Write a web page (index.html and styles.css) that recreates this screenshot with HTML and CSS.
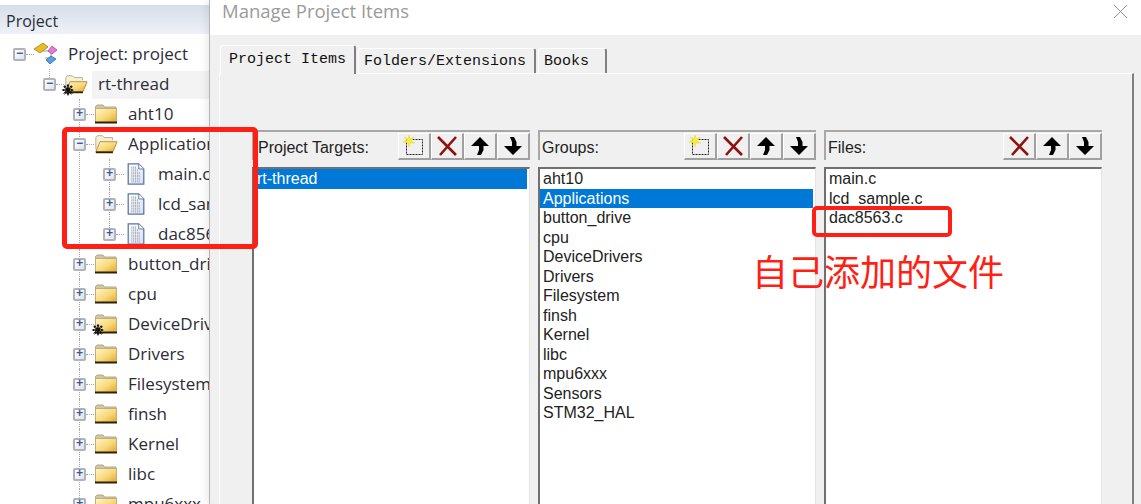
FILE: index.html
```html
<!DOCTYPE html>
<html lang="zh-CN">
<head>
    <meta charset="UTF-8">
    <title>Manage Project Items</title>
    <link rel="stylesheet" href="styles.css">
</head>
<body>
    <svg class="sprites" width="0" height="0" aria-hidden="true">
        <defs>
            <linearGradient id="folderFill" x1="0" y1="0" x2="1" y2="1">
                <stop offset="0" stop-color="#fff6c8"/>
                <stop offset="0.55" stop-color="#f8d878"/>
                <stop offset="1" stop-color="#dfa32c"/>
            </linearGradient>
            <linearGradient id="docFill" x1="0" y1="0" x2="1" y2="1">
                <stop offset="0" stop-color="#ffffff"/>
                <stop offset="1" stop-color="#d5e0f2"/>
            </linearGradient>
            <symbol id="folder" viewBox="0 0 24 22">
                <path d="M1.5 5V3.5L3 2h6l1.5 2H22v2H1.500z" fill="#cfc7a6" stroke="#b3aa88"/>
                <rect x="1.500" y="5.500" width="21" height="14" fill="url(#folderFill)" stroke="#bfae78"/>
                <rect x="1" y="18.500" width="22" height="2" fill="#2d2206"/>
            </symbol>
            <symbol id="folder-open" viewBox="0 0 26 22">
                <path d="M2 17V4l1.500-2H9l2 2h9v3" fill="#f6f0d6" stroke="#b3aa88"/>
                <path d="M2 19.500 6.500 8.500H25L20.500 19.500z" fill="url(#folderFill)" stroke="#b58c30"/>
                <path d="M2 20h18.500" stroke="#2d2206" stroke-width="2"/>
            </symbol>
            <symbol id="doc" viewBox="0 0 20 24">
                <path d="M1.500 1H13L18.500 6.500V23H1.500z" fill="url(#docFill)" stroke="#5f769f" stroke-width="1.400"/>
                <path d="M13 1V6.500h5.500" fill="#fff" stroke="#5f769f"/>
                <path d="M5 5h6M5 8h8M5 11h10M5 14h10M5 17h10M5 20h10" stroke="#a8acb6" stroke-width="2.400" stroke-dasharray="1 1"/>
            </symbol>
            <symbol id="gear" viewBox="0 0 12 12">
                <path d="M6 .5v11M.5 6h11M2 2l8 8M10 2l-8 8" stroke="#111" stroke-width="2.200" stroke-dasharray="2.200 .5"/>
            </symbol>
            <symbol id="project" viewBox="0 0 24 22">
                <path d="M8 8h9M17 8v9M11 15h6" fill="none" stroke="#9a9a9a"/>
                <path d="M9 0 14 4 6 10 0 6z" fill="#e6bc2c" stroke="#a58214" stroke-width=".8"/>
                <path d="M18 3 23 7 18 11 14 8z" fill="#e77ad6" stroke="#a54a98" stroke-width=".8"/>
                <path d="M17 13 22 16 16 21 12 17z" fill="#5c9fe0" stroke="#2d68a8" stroke-width=".8"/>
            </symbol>
            <symbol id="tool-new" viewBox="0 0 22 22">
                <rect x="3.500" y="4.500" width="16" height="15" fill="none" stroke="#222" stroke-dasharray="2 1"/>
                <path d="M6 0 7 4 11 2 8 6 12 8 7 8 6 12 5 8 0 7 4 5 1 2 5 4z" fill="#f6ee3c" stroke="#e8d820" stroke-width=".5"/>
            </symbol>
            <symbol id="tool-del" viewBox="0 0 22 22">
                <path d="M2 2 20 20M20 2 4 20" fill="none" stroke="#8e1010" stroke-width="2.600"/>
            </symbol>
            <symbol id="tool-up" viewBox="0 0 22 22">
                <path d="M11 2 20 11H14.500V15L12 20H8L10 15V11H2z" fill="#000"/>
            </symbol>
            <symbol id="tool-down" viewBox="0 0 22 22">
                <path d="M11 20 20 11H14.500V7L12 2H8L10 7V11H2z" fill="#000"/>
            </symbol>
        </defs>
    </svg>

    <div class="page">
        <aside class="project">
            <div class="project-head">Project</div>
            <ul class="tree">
                <li>
                    <div class="node">
                        <span class="toggle">&minus;</span><span class="dots"></span>
                        <svg class="icon"><use href="#project"/></svg>
                        <span class="label">Project: project</span>
                    </div>
                    <ul>
                        <li>
                            <div class="node">
                                <span class="toggle">&minus;</span><span class="dots"></span>
                                <span class="icon-wrap">
                                    <svg class="icon"><use href="#folder-open"/></svg>
                                    <svg class="gear"><use href="#gear"/></svg>
                                </span>
                                <span class="label current">rt-thread</span>
                            </div>
                            <ul>
                                <li>
                                    <div class="node">
                                        <span class="toggle">+</span><span class="dots"></span>
                                        <svg class="icon"><use href="#folder"/></svg>
                                        <span class="label">aht10</span>
                                    </div>
                                </li>
                                <li>
                                    <div class="node">
                                        <span class="toggle">&minus;</span><span class="dots"></span>
                                        <svg class="icon"><use href="#folder-open"/></svg>
                                        <span class="label">Applications</span>
                                    </div>
                                    <ul>
                                        <li>
                                            <div class="node">
                                                <span class="toggle">+</span><span class="dots"></span>
                                                <svg class="icon"><use href="#doc"/></svg>
                                                <span class="label">main.c</span>
                                            </div>
                                        </li>
                                        <li>
                                            <div class="node">
                                                <span class="toggle">+</span><span class="dots"></span>
                                                <svg class="icon"><use href="#doc"/></svg>
                                                <span class="label">lcd_sample.c</span>
                                            </div>
                                        </li>
                                        <li>
                                            <div class="node">
                                                <span class="toggle">+</span><span class="dots"></span>
                                                <svg class="icon"><use href="#doc"/></svg>
                                                <span class="label">dac8563.c</span>
                                            </div>
                                        </li>
                                    </ul>
                                </li>
                                <li>
                                    <div class="node">
                                        <span class="toggle">+</span><span class="dots"></span>
                                        <svg class="icon"><use href="#folder"/></svg>
                                        <span class="label">button_drive</span>
                                    </div>
                                </li>
                                <li>
                                    <div class="node">
                                        <span class="toggle">+</span><span class="dots"></span>
                                        <svg class="icon"><use href="#folder"/></svg>
                                        <span class="label">cpu</span>
                                    </div>
                                </li>
                                <li>
                                    <div class="node">
                                        <span class="toggle">+</span><span class="dots"></span>
                                        <span class="icon-wrap">
                                            <svg class="icon"><use href="#folder"/></svg>
                                            <svg class="gear"><use href="#gear"/></svg>
                                        </span>
                                        <span class="label">DeviceDrivers</span>
                                    </div>
                                </li>
                                <li>
                                    <div class="node">
                                        <span class="toggle">+</span><span class="dots"></span>
                                        <svg class="icon"><use href="#folder"/></svg>
                                        <span class="label">Drivers</span>
                                    </div>
                                </li>
                                <li>
                                    <div class="node">
                                        <span class="toggle">+</span><span class="dots"></span>
                                        <svg class="icon"><use href="#folder"/></svg>
                                        <span class="label">Filesystem</span>
                                    </div>
                                </li>
                                <li>
                                    <div class="node">
                                        <span class="toggle">+</span><span class="dots"></span>
                                        <svg class="icon"><use href="#folder"/></svg>
                                        <span class="label">finsh</span>
                                    </div>
                                </li>
                                <li>
                                    <div class="node">
                                        <span class="toggle">+</span><span class="dots"></span>
                                        <svg class="icon"><use href="#folder"/></svg>
                                        <span class="label">Kernel</span>
                                    </div>
                                </li>
                                <li>
                                    <div class="node">
                                        <span class="toggle">+</span><span class="dots"></span>
                                        <svg class="icon"><use href="#folder"/></svg>
                                        <span class="label">libc</span>
                                    </div>
                                </li>
                                <li>
                                    <div class="node">
                                        <span class="toggle">+</span><span class="dots"></span>
                                        <svg class="icon"><use href="#folder"/></svg>
                                        <span class="label">mpu6xxx</span>
                                    </div>
                                </li>
                            </ul>
                        </li>
                    </ul>
                </li>
            </ul>
        </aside>

        <section class="dialog">
            <header class="dialog-title">
                <span>Manage Project Items</span>
                <svg class="close" viewBox="0 0 16 16"><path d="M1 1 15 15M15 1 1 15"/></svg>
            </header>
            <div class="dialog-body">
                <div class="tabs">
                    <div class="tab active">Project Items</div>
                    <div class="tab">Folders/Extensions</div>
                    <div class="tab tab-books">Books</div>
                </div>
                <div class="pane">
                    <div class="column">
                        <div class="column-head">
                            <span>Project Targets:</span>
                            <div class="tools">
                                <button class="tool"><svg><use href="#tool-new"/></svg></button>
                                <button class="tool"><svg><use href="#tool-del"/></svg></button>
                                <button class="tool"><svg><use href="#tool-up"/></svg></button>
                                <button class="tool"><svg><use href="#tool-down"/></svg></button>
                            </div>
                        </div>
                        <div class="list">
                            <div class="selected">rt-thread</div>
                        </div>
                    </div>
                    <div class="column">
                        <div class="column-head">
                            <span>Groups:</span>
                            <div class="tools">
                                <button class="tool"><svg><use href="#tool-new"/></svg></button>
                                <button class="tool"><svg><use href="#tool-del"/></svg></button>
                                <button class="tool"><svg><use href="#tool-up"/></svg></button>
                                <button class="tool"><svg><use href="#tool-down"/></svg></button>
                            </div>
                        </div>
                        <div class="list">
                            <div>aht10</div>
                            <div class="selected">Applications</div>
                            <div>button_drive</div>
                            <div>cpu</div>
                            <div>DeviceDrivers</div>
                            <div>Drivers</div>
                            <div>Filesystem</div>
                            <div>finsh</div>
                            <div>Kernel</div>
                            <div>libc</div>
                            <div>mpu6xxx</div>
                            <div>Sensors</div>
                            <div>STM32_HAL</div>
                        </div>
                    </div>
                    <div class="column">
                        <div class="column-head">
                            <span>Files:</span>
                            <div class="tools">
                                <button class="tool"><svg><use href="#tool-del"/></svg></button>
                                <button class="tool"><svg><use href="#tool-up"/></svg></button>
                                <button class="tool"><svg><use href="#tool-down"/></svg></button>
                            </div>
                        </div>
                        <div class="list">
                            <div>main.c</div>
                            <div>lcd_sample.c</div>
                            <div>dac8563.c</div>
                        </div>
                    </div>
                </div>
            </div>
        </section>

        <!-- red markup drawn over the screenshot -->
        <div class="mark mark-tree"></div>
        <div class="mark mark-file"></div>
        <div class="note">自己添加的文件</div>
    </div>
</body>
</html>
```

FILE: styles.css
```css
* {
    box-sizing: border-box;
}
html, body {
    margin: 0;
    height: 100%;
    overflow: hidden;
}
body {
    font-family: "Liberation Sans", Arial, sans-serif;
    background-color: #ffffff;
}
.sprites {
    position: absolute;
}
.page {
    position: relative;
    display: flex;
    width: 1141px;
    height: 504px;
    overflow: hidden;
}

/* project tree */
.project {
    flex: 0 0 209px;
    overflow: hidden;
    padding-top: 5px;
    font-family: "Open Sans", sans-serif;
}
.project-head {
    height: 29px;
    line-height: 32px;
    padding-left: 6px;
    font-size: 16px;
    color: #2c2c38;
    background: linear-gradient(to bottom, #d6deea, #eef2f7);
}
.tree, .tree ul {
    list-style: none;
    margin: 0;
    padding: 0;
}
.tree {
    padding: 5px 0 0 19px;
}
.tree ul {
    margin-left: 30px;
}
.tree ul li {
    position: relative;
}
.tree ul li::before {
    content: "";
    position: absolute;
    left: 0;
    top: 0;
    bottom: 0;
    border-left: 1px dotted #a8a8a8;
}
.tree ul li:last-child::before {
    bottom: auto;
    height: 15px;
}
.node {
    position: relative;
    display: flex;
    align-items: center;
    height: 30px;
}
.toggle {
    flex: 0 0 13px;
    width: 13px;
    height: 13px;
    margin-left: -6px;
    border: 2px solid #b0b3ba;
    border-radius: 2px;
    background: linear-gradient(135deg, #ffffff, #dfe2e8);
    color: #3c5a98;
    font: bold 12px/9px "Liberation Mono", monospace;
    text-align: center;
}
.dots {
    flex: 0 0 8px;
    border-top: 1px dotted #a8a8a8;
}
.icon, .icon-wrap {
    flex: 0 0 24px;
    width: 24px;
    height: 22px;
}
.icon-wrap {
    position: relative;
}
.gear {
    position: absolute;
    left: -2px;
    bottom: -1px;
    width: 12px;
    height: 12px;
}
.label {
    flex: 1;
    align-self: stretch;
    margin: 2px 0 0 4px;
    padding-left: 6px;
    line-height: 25px;
    font-size: 17px;
    color: #2c2c38;
    white-space: nowrap;
}
.label.current {
    background-color: #f3f3f3;
}

/* dialog */
.dialog {
    flex: 1;
    display: flex;
    flex-direction: column;
    min-width: 0;
    border-left: 1px solid #b4b4b4;
    box-shadow: -4px 0 6px rgba(0,0,0,0.06);
    z-index: 1;
}
.dialog-title {
    display: flex;
    align-items: center;
    justify-content: space-between;
    flex: 0 0 35px;
    padding: 0 13px 13px 12px;
    background-color: #ffffff;
    color: #9a9a9a;
    font-family: "Open Sans", sans-serif;
    font-size: 18.500px;
    line-height: 22px;
}
.close {
    width: 15px;
    height: 15px;
    fill: none;
    stroke: #8c8c8c;
}
.dialog-body {
    flex: 1;
    display: flex;
    flex-direction: column;
    min-height: 0;
    padding: 10px 7px 0 9px;
    background-color: #f0f0f0;
}
.tabs {
    display: flex;
    align-items: flex-end;
    flex: 0 0 28px;
    padding-left: 1px;
}
.tab {
    height: 25px;
    margin-right: 2px;
    padding: 0 8px 0 5px;
    border-top: 1px solid #ffffff;
    border-left: 1px solid #ffffff;
    border-right: 2px solid #808080;
    border-radius: 3px 3px 0 0;
    font-family: "Liberation Mono", monospace;
    font-size: 15px;
    line-height: 25px;
    color: #111111;
}
.tab.active {
    height: 29px;
    margin-bottom: -1px;
    padding: 0 8px;
    line-height: 27px;
    background-color: #f0f0f0;
    position: relative;
}
.tab-books {
    padding-right: 16px;
}
.pane {
    flex: 1;
    display: grid;
    grid-template-columns: repeat(3, 278px);
    column-gap: 8px;
    min-height: 0;
    padding: 56px 0 0 32px;
    border-top: 1px solid #ffffff;
    border-left: 1px solid #ffffff;
    border-right: 2px solid #808080;
}
.column {
    display: flex;
    flex-direction: column;
    min-height: 0;
}
.column-head {
    display: flex;
    align-items: flex-end;
    justify-content: space-between;
    flex: 0 0 30px;
    padding-left: 2px;
    border-top: 2px solid #a8a8a8;
    border-left: 2px solid #a8a8a8;
    font-size: 16px;
    color: #222222;
}
.column:first-child .column-head {
    padding-left: 4px;
}
.column-head span {
    align-self: center;
    padding-top: 3px;
}
.tools {
    display: flex;
}
.tool {
    width: 33px;
    height: 27px;
    padding: 0;
    border: 0;
    border-top: 1px solid #ffffff;
    border-left: 1px solid #ffffff;
    border-right: 2px solid #a0a0a0;
    border-bottom: 2px solid #a0a0a0;
    background-color: #f0f0f0;
    display: flex;
    align-items: center;
    justify-content: center;
}
.tool svg {
    width: 22px;
    height: 22px;
}
.list {
    flex: 1;
    margin-top: 7px;
    border-top: 2px solid #707070;
    border-left: 2px solid #707070;
    border-right: 1px solid #e4e4e4;
    background-color: #ffffff;
    font-size: 16px;
    line-height: 19.500px;
    color: #222222;
}
.list div {
    padding-left: 3px;
    margin-right: 2px;
}
.list .selected {
    background-color: #0078d7;
    color: #ffffff;
}

/* red markup */
.mark {
    position: absolute;
    z-index: 2;
    border: 5px solid #ff1f14;
    border-radius: 5px;
}
.mark-tree {
    left: 62px;
    top: 127px;
    width: 196px;
    height: 122px;
}
.mark-file {
    left: 812px;
    top: 206px;
    width: 140px;
    height: 31px;
    border-width: 4px;
}
.note {
    position: absolute;
    z-index: 2;
    left: 752px;
    top: 244px;
    font-family: "Noto Sans CJK SC", sans-serif;
    font-size: 36px;
    line-height: 52px;
    color: #ff1f14;
    white-space: nowrap;
}
```
